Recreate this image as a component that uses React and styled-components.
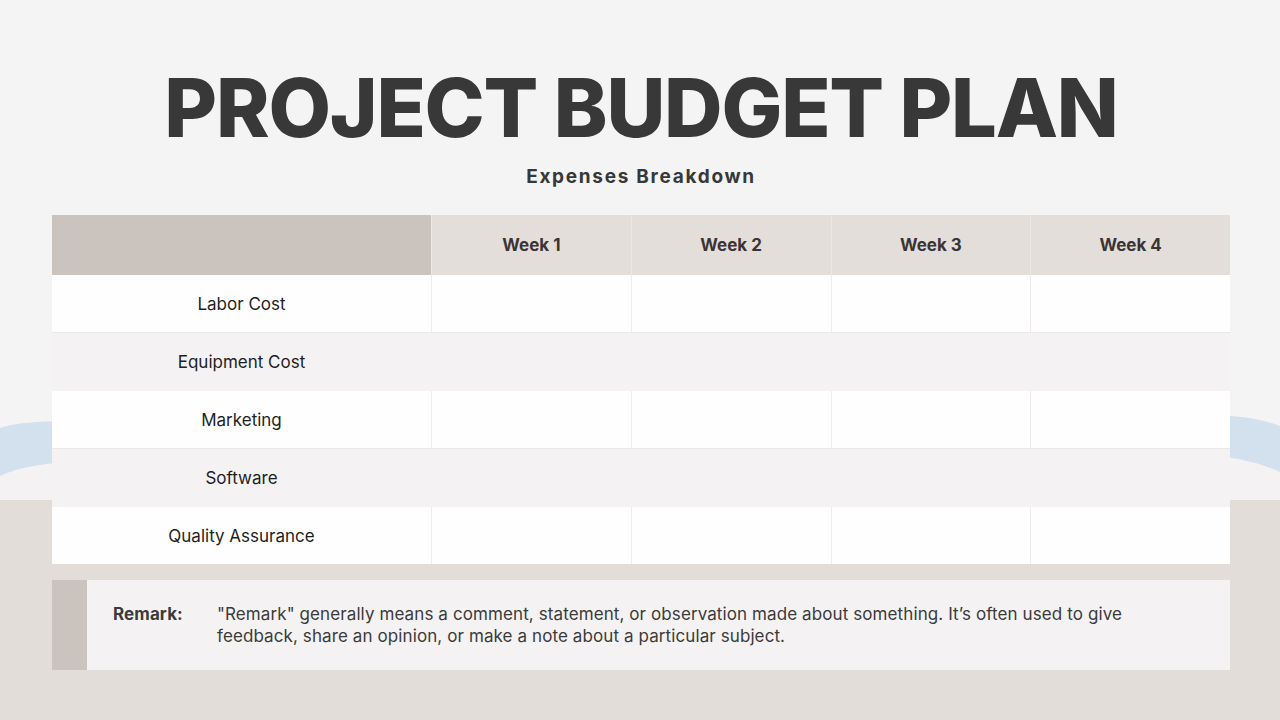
import React from "react";
import styled, { createGlobalStyle } from "styled-components";

const Global = createGlobalStyle`
  html, body { margin: 0; padding: 0; }
  body { font-family: "Inter", "Noto Sans", sans-serif; background: #f4f4f4; }
`;

const Page = styled.div`
  position: relative;
  width: 1280px;
  height: 720px;
  overflow: hidden;
  background: #f4f4f4;
`;

const Backdrop = styled.svg`
  position: absolute;
  left: 0;
  top: 0;
  width: 1280px;
  height: 720px;
  z-index: 0;
`;

const Content = styled.div`
  position: relative;
  z-index: 1;
  display: flex;
  flex-direction: column;
  align-items: center;
  padding: 66px 0 0 2px;
`;

const Title = styled.h1`
  margin: 0;
  font-family: "Inter", sans-serif;
  font-weight: 800;
  font-size: 81px;
  line-height: 84px;
  letter-spacing: -1.2px;
  color: #383838;
`;

const Subtitle = styled.h2`
  margin: 15px 0 0;
  font-family: "Inter", sans-serif;
  font-weight: 700;
  font-size: 19px;
  line-height: 24px;
  letter-spacing: 1.7px;
  color: #383838;
`;

const Table = styled.div`
  margin-top: 26px;
  width: 1178px;
  display: grid;
  grid-template-columns: 379px repeat(4, 1fr);
`;

const HeadCell = styled.div`
  height: 60px;
  display: flex;
  align-items: center;
  justify-content: center;
  background: ${(p) => (p.$corner ? "#cbc4be" : "#e4dedb")};
  border-left: ${(p) => (p.$corner ? "none" : "1px solid #ece8e6")};
  font-weight: 700;
  font-size: 17px;
  color: #3a3434;
`;

const Cell = styled.div`
  height: ${(p) => (p.$last ? "57px" : "58px")};
  box-sizing: border-box;
  display: flex;
  align-items: center;
  justify-content: center;
  background: ${(p) => (p.$alt ? "#f4f2f3" : "#fefefe")};
  border-left: ${(p) => (p.$alt || p.$first ? "none" : "1px solid #efebeb")};
  border-bottom: ${(p) => (p.$alt || p.$last ? "none" : "1px solid #ebe8e8")};
  font-size: 17px;
  color: #1e1e1e;
`;

const Remark = styled.div`
  margin-top: 16px;
  width: 1178px;
  height: 90px;
  display: flex;
  background: #f4f2f3;
`;

const RemarkBar = styled.div`
  width: 35px;
  background: #cbc4be;
`;

const RemarkBody = styled.div`
  display: flex;
  padding: 23px 0 0 26px;
  font-size: 17px;
  line-height: 22px;
  letter-spacing: 0.1px;
  color: #3b3b3b;
`;

const RemarkLabel = styled.div`
  width: 104px;
  font-weight: 700;
`;

const RemarkText = styled.div`
  width: 928px;
`;

const rows = ["Labor Cost", "Equipment Cost", "Marketing", "Software", "Quality Assurance"];
const weeks = ["Week 1", "Week 2", "Week 3", "Week 4"];

export default function App() {
  return (
    <Page>
      <Global />
      <Backdrop viewBox="0 0 1280 720">
        <path
          d="M0 428 C 15 423, 35 421, 80 421 L 1200 416 C 1230 414, 1260 418, 1280 426 L 1280 500 L 0 500 Z"
          fill="#d3e1ef"
        />
        <path
          d="M0 476 C 15 469, 35 464, 70 462 L 1200 456 C 1235 456, 1260 463, 1280 472 L 1280 500 L 0 500 Z"
          fill="#f4f2f3"
        />
        <rect x="0" y="500" width="1280" height="220" fill="#e3ddda" />
      </Backdrop>
      <Content>
        <Title>PROJECT BUDGET PLAN</Title>
        <Subtitle>Expenses Breakdown</Subtitle>
        <Table>
          <HeadCell $corner />
          {weeks.map((w) => (
            <HeadCell key={w}>{w}</HeadCell>
          ))}
          {rows.map((r, i) => {
            const alt = i % 2 === 1;
            const last = i === rows.length - 1;
            return (
              <React.Fragment key={r}>
                <Cell $alt={alt} $last={last} $first>
                  {r}
                </Cell>
                {weeks.map((w) => (
                  <Cell key={w} $alt={alt} $last={last} />
                ))}
              </React.Fragment>
            );
          })}
        </Table>
        <Remark>
          <RemarkBar />
          <RemarkBody>
            <RemarkLabel>Remark:</RemarkLabel>
            <RemarkText>
              "Remark" generally means a comment, statement, or observation made about something. It’s often used to give feedback, share an opinion, or make a note about a particular subject.
            </RemarkText>
          </RemarkBody>
        </Remark>
      </Content>
    </Page>
  );
}
